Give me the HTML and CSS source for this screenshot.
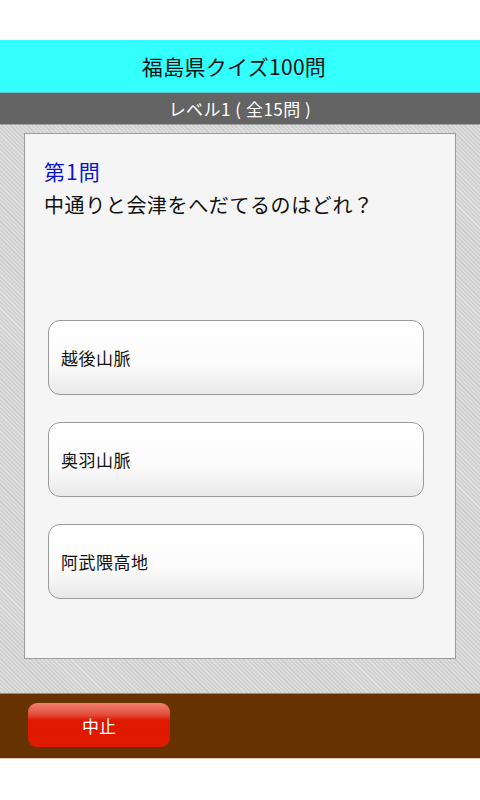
FILE: index.html
```html
<!DOCTYPE html>
<html lang="ja">
<head>
<meta charset="utf-8">
<link rel="stylesheet" href="styles.css">
</head>
<body>
<div class="screen">
  <div class="topgap"></div>
  <header class="title">福島県クイズ100問</header>
  <div class="level">レベル1 ( 全15問 )</div>
  <main class="stage">
    <section class="card">
      <div class="qnum">第1問</div>
      <div class="question">中通りと会津をへだてるのはどれ？</div>
      <div class="options">
        <div class="option">越後山脈</div>
        <div class="option">奥羽山脈</div>
        <div class="option">阿武隈高地</div>
      </div>
    </section>
  </main>
  <footer class="footer">
    <div class="stop">中止</div>
  </footer>
</div>
</body>
</html>
```
FILE: styles.css
```css
html, body {
  margin: 0;
  padding: 0;
  background: #ffffff;
}
body {
  font-family: "Noto Sans CJK JP", "Noto Sans", sans-serif;
}
.screen {
  width: 480px;
  height: 800px;
  display: flex;
  flex-direction: column;
}
.topgap {
  height: 40px;
  background: #ffffff;
}
.title {
  height: 52px;
  background: #33ffff;
  border-bottom: 1px solid #5ac8c8;
  display: flex;
  align-items: center;
  justify-content: center;
  padding-right: 12px;
  font-size: 21px;
  letter-spacing: 0.3px;
  color: #111;
}
.level {
  height: 31px;
  background: #646464;
  border-bottom: 1px solid #a0a0a0;
  display: flex;
  align-items: center;
  justify-content: center;
  font-size: 17px;
  letter-spacing: 0.5px;
  color: #fff;
}
.stage {
  height: 568px;
  box-sizing: border-box;
  padding: 8px 24px 34px 24px;
  background: repeating-linear-gradient(45deg, #d0d0d0 0px, #d0d0d0 1.5px, #dcdcdc 1.5px, #dcdcdc 3px);
  display: flex;
}
.card {
  flex: 1;
  background: #f5f5f5;
  border: 1px solid #9a9a9a;
  padding: 22px 31px 0 19px;
}
.qnum {
  color: #0a14d2;
  font-size: 21px;
  letter-spacing: 1px;
  line-height: 30px;
}
.question {
  color: #111;
  font-size: 20px;
  line-height: 30px;
  margin-top: 4px;
  letter-spacing: 0.6px;
}
.options {
  margin-top: 100px;
  padding-left: 4px;
  display: flex;
  flex-direction: column;
  gap: 27px;
}
.option {
  height: 73px;
  border: 1px solid #9a9a9a;
  border-radius: 12px;
  background: linear-gradient(#ffffff 0%, #fbfbfb 60%, #e9e9e9 100%);
  display: flex;
  align-items: center;
  padding-left: 12px;
  font-size: 17px;
  letter-spacing: 0.5px;
  color: #111;
}
.footer {
  height: 64px;
  background: #663300;
  border-top: 1px solid #b08070;
  border-bottom: 1px solid #e0c8b8;
  display: flex;
  align-items: center;
  padding-left: 28px;
}
.stop {
  width: 142px;
  height: 44px;
  border-radius: 9px;
  background: linear-gradient(#f08070 0%, #e45040 25%, #e01800 40%, #dd1a00 100%);
  color: #fff;
  font-size: 17px;
  display: flex;
  align-items: center;
  justify-content: center;
  margin-top: -2px;
}
```
